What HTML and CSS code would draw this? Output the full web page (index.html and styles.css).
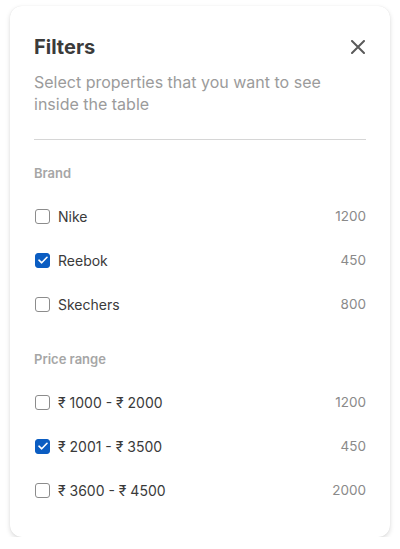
FILE: index.html
```html
<!DOCTYPE html>
<html>
<head>
  <title>Filters</title>
  <link rel="stylesheet" href="styles.css">
</head>
<body>
  <div class="card">
    <div class="header">
      <h1>Filters</h1>
      <button class="close" aria-label="Close">
        <svg width="14" height="14" viewBox="0 0 14 14"><path d="M1 1L13 13M13 1L1 13" stroke="#5a5a5a" stroke-width="2" stroke-linecap="round"/></svg>
      </button>
    </div>
    <p class="subtitle">Select properties that you want to see inside the table</p>
    <hr class="divider">

    <div class="section">
      <div class="section-title">Brand</div>
      <label class="row"><span class="box"></span><span class="name">Nike</span><span class="count">1200</span></label>
      <label class="row"><span class="box checked"><svg width="10" height="8" viewBox="0 0 10 8"><path d="M1 4.2L3.7 6.8L9 1.3" fill="none" stroke="#fff" stroke-width="1.6" stroke-linecap="round" stroke-linejoin="round"/></svg></span><span class="name">Reebok</span><span class="count">450</span></label>
      <label class="row"><span class="box"></span><span class="name">Skechers</span><span class="count">800</span></label>
    </div>

    <div class="section">
      <div class="section-title">Price range</div>
      <label class="row"><span class="box"></span><span class="name">₹ 1000 - ₹ 2000</span><span class="count">1200</span></label>
      <label class="row"><span class="box checked"><svg width="10" height="8" viewBox="0 0 10 8"><path d="M1 4.2L3.7 6.8L9 1.3" fill="none" stroke="#fff" stroke-width="1.6" stroke-linecap="round" stroke-linejoin="round"/></svg></span><span class="name">₹ 2001 - ₹ 3500</span><span class="count">450</span></label>
      <label class="row"><span class="box"></span><span class="name">₹ 3600 - ₹ 4500</span><span class="count">2000</span></label>
    </div>
  </div>
</body>
</html>
```
FILE: styles.css
```css
body {
  margin: 0;
  background: #fff;
  font-family: Inter, "Noto Sans", sans-serif;
}
.card {
  box-sizing: border-box;
  width: 380px;
  margin: 6px 0 0 10px;
  padding: 29px 24px 25px;
  border-radius: 12px;
  background: #fff;
  box-shadow: 0 2px 5px rgba(0, 0, 0, 0.14), 0 0 1px rgba(0, 0, 0, 0.1);
}
.header {
  display: flex;
  justify-content: space-between;
  align-items: center;
}
h1 {
  margin: 0;
  font-size: 20px;
  line-height: 24px;
  font-weight: 700;
  color: #3b3b3b;
}
.close {
  display: flex;
  padding: 0;
  margin-right: 1px;
  border: none;
  background: none;
  cursor: pointer;
}
.subtitle {
  margin: 12px 0 0;
  font-size: 16px;
  line-height: 22px;
  color: #9b9b9b;
}
.divider {
  margin: 24px 0 0;
  border: none;
  border-top: 1px solid #d6d6d6;
}
.section {
  margin-top: 24px;
}
.section-title {
  font-size: 13px;
  line-height: 18px;
  font-weight: 600;
  color: #a6a6a6;
  margin-bottom: 12px;
}
.row {
  display: flex;
  align-items: center;
  height: 44px;
  font-size: 14px;
  color: #3a3a3a;
}
.box {
  box-sizing: border-box;
  width: 15px;
  height: 15px;
  margin-left: 1px;
  margin-right: 8px;
  border: 1.5px solid #8c8c8c;
  border-radius: 3px;
  display: flex;
  align-items: center;
  justify-content: center;
}
.box.checked {
  background: #0b5dc2;
  border-color: #0b5dc2;
}
.name {
  flex: 1;
}
.count {
  font-size: 13.5px;
  color: #8a8a8a;
}
```
